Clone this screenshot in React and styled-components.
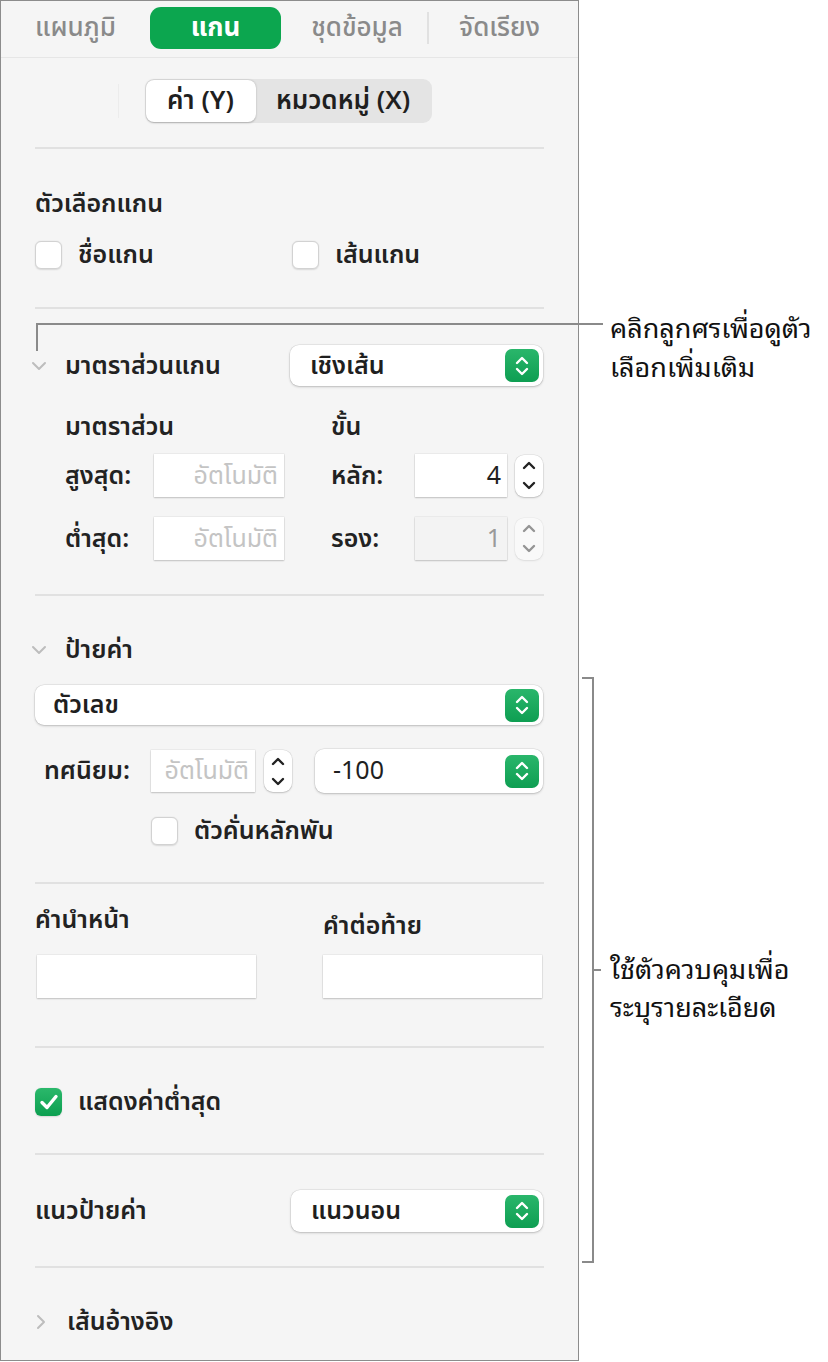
import React from "react"
import styled, { createGlobalStyle } from "styled-components"

const GlobalStyle = createGlobalStyle`
    body {
        margin: 0;
        background: #ffffff;
        font-family: "Noto Sans Thai", "Noto Sans", "DejaVu Sans", sans-serif;
        color: #1e1e1e;
    }
`

const Page = styled.div`
    position: relative;
    display: flex;
    width: 828px;
    height: 1362px;
`

const Panel = styled.div`
    box-sizing: border-box;
    width: 579px;
    height: 1361px;
    background: #f5f5f5;
    border: 1.5px solid #8c8c8c;
    display: flex;
    flex-direction: column;
`

const TabBar = styled.div`
    box-sizing: border-box;
    height: 57px;
    display: flex;
    align-items: center;
    padding: 0 0 2px 31px;
    border-bottom: 1.5px solid #e6e6e6;
`

const Tab = styled.div`
    height: 42px;
    display: flex;
    align-items: center;
    justify-content: center;
    box-sizing: border-box;
    width: ${(p) => p.$w || "auto"};
    margin-right: ${(p) => p.$gap || 0}px;
    border-radius: 11px;
    font-size: 26px;
    font-weight: ${(p) => (p.$active ? 700 : 500)};
    color: ${(p) => (p.$active ? "#ffffff" : "#8a8a8a")};
    background: ${(p) => (p.$active ? "#0ca64f" : "transparent")};
    white-space: nowrap;
`

const TabSep = styled.div`
    width: 1.5px;
    height: 32px;
    background: #e1e1e1;
    margin-right: 30px;
`

const SegmentWrap = styled.div`
    display: flex;
    justify-content: center;
    align-items: center;
    padding: 21px 0 0 0;
    height: 44px;
    gap: 26px;
`

const FaintSep = styled.div`
    width: 1px;
    height: 34px;
    background: #ececec;
`

const Segment = styled.div`
    display: flex;
    height: 44px;
    background: #e4e4e4;
    border-radius: 9px;
    padding: 1px;
    box-sizing: border-box;
    margin-right: 30px;
`

const SegItem = styled.div`
    display: flex;
    align-items: center;
    justify-content: center;
    width: ${(p) => p.$w}px;
    font-size: 26px;
    font-weight: 600;
    color: #1f1f1f;
    border-radius: 8px;
    background: ${(p) => (p.$on ? "#ffffff" : "transparent")};
    box-shadow: ${(p) => (p.$on ? "0 0.5px 2px rgba(0,0,0,0.25)" : "none")};
    white-space: nowrap;
`

const Divider = styled.div`
    flex-shrink: 0;
    height: 2px;
    background: #e1e1e1;
    margin: ${(p) => p.$top || 0}px 34px 0 34px;
`

const Section = styled.div`
    display: flex;
    flex-direction: column;
    padding: ${(p) => p.$pad};
`

const Label = styled.div`
    flex-shrink: 0;
    width: ${(p) => (p.$w ? `${p.$w}px` : "auto")};
    font-size: 25px;
    font-weight: 600;
    color: #222222;
    line-height: 28px;
    white-space: nowrap;
`

const CheckRow = styled.div`
    display: flex;
    align-items: center;
    height: 30px;
    margin-top: ${(p) => p.$top || 0}px;
    padding-left: ${(p) => p.$indent || 0}px;
`

const CheckItem = styled.div`
    display: flex;
    align-items: center;
    gap: 16px;
    width: ${(p) => p.$w || "auto"};
`

const Box = styled.div`
    box-sizing: border-box;
    flex-shrink: 0;
    width: 27px;
    height: 28px;
    border-radius: 6px;
    background: ${(p) => (p.$checked ? "linear-gradient(#2bb86b, #0c9f50)" : "#ffffff")};
    border: ${(p) => (p.$checked ? "none" : "1px solid #d2d2d2")};
    box-shadow: 0 0.5px 1.5px rgba(0, 0, 0, 0.12);
    display: flex;
    align-items: center;
    justify-content: center;
`

const HeadRow = styled.div`
    display: flex;
    align-items: center;
    justify-content: space-between;
    height: ${(p) => p.$h || 41}px;
`

const Disclosure = styled.div`
    display: flex;
    align-items: center;
    gap: 18px;
`

const Popup = styled.div`
    box-sizing: border-box;
    flex-shrink: 0;
    width: ${(p) => p.$w};
    height: ${(p) => p.$h || 41}px;
    margin-left: ${(p) => p.$ml || 0}px;
    background: #ffffff;
    border-radius: 9px;
    box-shadow: 0 0 0 0.5px rgba(0, 0, 0, 0.1), 0 1px 2.5px rgba(0, 0, 0, 0.2);
    display: flex;
    align-items: center;
    justify-content: space-between;
    padding: 0 4px 0 ${(p) => p.$padLeft || 20}px;
    font-size: 25px;
    font-weight: ${(p) => (p.$light ? 400 : 600)};
    color: #1f1f1f;
`

const PopBtn = styled.div`
    width: 34px;
    height: 33px;
    border-radius: 7px;
    background: linear-gradient(#2ab66b, #0e9e52);
    display: flex;
    align-items: center;
    justify-content: center;
`

const ScaleRow = styled.div`
    display: flex;
    align-items: center;
    height: ${(p) => p.$h || 43}px;
    margin-top: ${(p) => p.$top || 0}px;
    padding-left: 34px;
`

const Gap = styled.div`
    flex-shrink: 0;
    width: ${(p) => p.$w || 0}px;
    height: ${(p) => p.$h || 0}px;
`

const Field = styled.div`
    box-sizing: border-box;
    flex-shrink: 0;
    width: ${(p) => p.$w || "100%"};
    height: ${(p) => p.$h || 43}px;
    margin-left: ${(p) => p.$ml || 0}px;
    background: ${(p) => (p.$disabled ? "#f3f3f3" : "#ffffff")};
    box-shadow: 0 0 0 0.5px rgba(0, 0, 0, 0.08), 0 1px 1.5px rgba(0, 0, 0, 0.18);
    display: flex;
    align-items: center;
    justify-content: flex-end;
    padding-right: 6px;
    font-size: 25px;
    color: ${(p) => (p.$dim ? "#c4c4c4" : p.$disabled ? "#9a9a9a" : "#1f1f1f")};
    white-space: nowrap;
    overflow: hidden;
`

const Stepper = styled.div`
    box-sizing: border-box;
    flex-shrink: 0;
    width: 28px;
    height: 42px;
    border-radius: 9px;
    background: #ffffff;
    box-shadow: 0 0 0 0.5px rgba(0, 0, 0, 0.1), 0 1px 2px rgba(0, 0, 0, 0.18);
    display: flex;
    flex-direction: column;
    align-items: center;
    justify-content: space-around;
    opacity: ${(p) => (p.$disabled ? 0.45 : 1)};
`

const DecimalRow = styled.div`
    display: flex;
    align-items: center;
    margin-top: 24px;
    padding-left: 13px;
`

const PairRow = styled.div`
    display: grid;
    grid-template-columns: 221px 67px 220px;
    align-items: end;
    margin-top: ${(p) => p.$top || 0}px;
`

const Callout = styled.div`
    position: absolute;
    left: ${(p) => p.$x}px;
    top: ${(p) => p.$y}px;
    display: flex;
    flex-direction: column;
    font-family: "Noto Sans Thai Looped", "Noto Sans Thai", "Noto Sans", sans-serif;
    font-size: 27px;
    color: #111111;
    white-space: nowrap;
`

const CalloutLine = styled.div`
    height: ${(p) => p.$lh || 39}px;
    line-height: ${(p) => p.$lh || 39}px;
`

const Line = styled.div`
    position: absolute;
    left: ${(p) => p.$x}px;
    top: ${(p) => p.$y}px;
    width: ${(p) => p.$w}px;
    height: ${(p) => p.$h}px;
    background: #8a8a8a;
`

const Chevron = ({ dir = "down" }) => (
    <svg width="16" height="16" viewBox="0 0 16 16">
        <path
            d={dir === "down" ? "M2 5 L8 11 L14 5" : "M5 2 L11 8 L5 14"}
            fill="none"
            stroke="#bdbdbd"
            strokeWidth="2"
            strokeLinecap="round"
            strokeLinejoin="round"
        />
    </svg>
)

const UpDown = () => (
    <svg width="16" height="24" viewBox="0 0 16 24">
        <path
            d="M3 9 L8 4 L13 9 M3 15 L8 20 L13 15"
            fill="none"
            stroke="#ffffff"
            strokeWidth="2.4"
            strokeLinecap="round"
            strokeLinejoin="round"
        />
    </svg>
)

const Arrow = ({ up }) => (
    <svg width="16" height="10" viewBox="0 0 16 10">
        <path
            d={up ? "M3 8 L8 3 L13 8" : "M3 2 L8 7 L13 2"}
            fill="none"
            stroke="#222222"
            strokeWidth="2.4"
            strokeLinecap="round"
            strokeLinejoin="round"
        />
    </svg>
)

const Check = () => (
    <svg width="20" height="18" viewBox="0 0 20 18">
        <path
            d="M3 9.5 L8 14.5 L17 3.5"
            fill="none"
            stroke="#ffffff"
            strokeWidth="3.4"
            strokeLinecap="round"
            strokeLinejoin="round"
        />
    </svg>
)

const Spin = ({ disabled }) => (
    <Stepper $disabled={disabled}>
        <Arrow up />
        <Arrow />
    </Stepper>
)

const Select = ({ children, ...rest }) => (
    <Popup {...rest}>
        {children}
        <PopBtn>
            <UpDown />
        </PopBtn>
    </Popup>
)

const App = () => {
    return (
        <Page>
            <GlobalStyle />
            <Panel>
                <TabBar>
                    <Tab $w="87px" $gap={31}>แผนภูมิ</Tab>
                    <Tab $active $w="131px" $gap={27}>แกน</Tab>
                    <Tab $w="98px" $gap={21}>ชุดข้อมูล</Tab>
                    <TabSep />
                    <Tab $w="82px">จัดเรียง</Tab>
                </TabBar>

                <SegmentWrap>
                    <FaintSep />
                    <Segment>
                        <SegItem $on $w={110}>ค่า (Y)</SegItem>
                        <SegItem $w={175}>หมวดหมู่ (X)</SegItem>
                    </Segment>
                </SegmentWrap>
                <Divider $top={24} />

                <Section $pad="41px 34px 0 34px">
                    <Label>ตัวเลือกแกน</Label>
                    <CheckRow $top={22}>
                        <CheckItem $w="257px">
                            <Box />
                            <Label>ชื่อแกน</Label>
                        </CheckItem>
                        <CheckItem>
                            <Box />
                            <Label>เส้นแกน</Label>
                        </CheckItem>
                    </CheckRow>
                </Section>
                <Divider $top={37} />

                <Section $pad="36px 35px 0 30px">
                    <HeadRow>
                        <Disclosure>
                            <Chevron />
                            <Label>มาตราส่วนแกน</Label>
                        </Disclosure>
                        <Select $w="253px">เชิงเส้น</Select>
                    </HeadRow>
                    <ScaleRow $h={28} $top={27}>
                        <Label $w={266}>มาตราส่วน</Label>
                        <Label>ขั้น</Label>
                    </ScaleRow>
                    <ScaleRow $top={13}>
                        <Label $w={89}>สูงสุด:</Label>
                        <Field $dim $w="130px">อัตโนมัติ</Field>
                        <Gap $w={47} />
                        <Label $w={84}>หลัก:</Label>
                        <Field $w="92px">4</Field>
                        <Gap $w={8} />
                        <Spin />
                    </ScaleRow>
                    <ScaleRow $top={20}>
                        <Label $w={89}>ต่ำสุด:</Label>
                        <Field $dim $w="130px">อัตโนมัติ</Field>
                        <Gap $w={47} />
                        <Label $w={84}>รอง:</Label>
                        <Field $disabled $w="92px">1</Field>
                        <Gap $w={8} />
                        <Spin disabled />
                    </ScaleRow>
                </Section>
                <Divider $top={34} />

                <Section $pad="40px 35px 0 30px">
                    <HeadRow $h={28}>
                        <Disclosure>
                            <Chevron />
                            <Label>ป้ายค่า</Label>
                        </Disclosure>
                    </HeadRow>
                    <Gap $h={21} />
                    <Select $w="508px" $h={40} $padLeft={18} $ml={4}>
                        ตัวเลข
                    </Select>
                    <DecimalRow>
                        <Label $w={107}>ทศนิยม:</Label>
                        <Field $dim $w="104px" $h={42}>
                            อัตโนมัติ
                        </Field>
                        <Gap $w={9} />
                        <Spin />
                        <Gap $w={23} />
                        <Select $w="228px" $h={44} $padLeft={18} $light>
                            -100
                        </Select>
                    </DecimalRow>
                    <CheckRow $top={23} $indent={120}>
                        <CheckItem>
                            <Box />
                            <Label>ตัวคั่นหลักพัน</Label>
                        </CheckItem>
                    </CheckRow>
                </Section>
                <Divider $top={36} />

                <Section $pad="22px 35px 0 34px">
                    <PairRow>
                        <Label style={{ paddingBottom: 6 }}>คำนำหน้า</Label>
                        <span />
                        <Label>คำต่อท้าย</Label>
                    </PairRow>
                    <PairRow $top={15}>
                        <Field $w="219px" $ml={2} />
                        <span />
                        <Field $w="219px" />
                    </PairRow>
                </Section>
                <Divider $top={48} />

                <Section $pad="40px 34px 0 34px">
                    <CheckItem>
                        <Box $checked>
                            <Check />
                        </Box>
                        <Label>แสดงค่าต่ำสุด</Label>
                    </CheckItem>
                </Section>
                <Divider $top={37} />

                <Section $pad="35px 35px 0 34px">
                    <HeadRow $h={42}>
                        <Label>แนวป้ายค่า</Label>
                        <Select $w="252px" $h={42}>
                            แนวนอน
                        </Select>
                    </HeadRow>
                </Section>
                <Divider $top={34} />

                <Section $pad="40px 34px 0 32px">
                    <Disclosure>
                        <Chevron dir="right" />
                        <Label>เส้นอ้างอิง</Label>
                    </Disclosure>
                </Section>
            </Panel>

            <Line $x={36} $y={323} $w={567} $h={1.5} />
            <Line $x={36} $y={323} $w={1.5} $h={28} />
            <Callout $x={610} $y={306}>
                <CalloutLine>คลิกลูกศรเพื่อดูตัว</CalloutLine>
                <CalloutLine>เลือกเพิ่มเติม</CalloutLine>
            </Callout>

            <Line $x={592} $y={677} $w={2} $h={586} />
            <Line $x={582} $y={677} $w={11} $h={2} />
            <Line $x={582} $y={1261} $w={11} $h={2} />
            <Line $x={592} $y={969} $w={9} $h={2} />
            <Callout $x={610} $y={948}>
                <CalloutLine $lh={38}>ใช้ตัวควบคุมเพื่อ</CalloutLine>
                <CalloutLine $lh={38}>ระบุรายละเอียด</CalloutLine>
            </Callout>
        </Page>
    )
}

export default App
